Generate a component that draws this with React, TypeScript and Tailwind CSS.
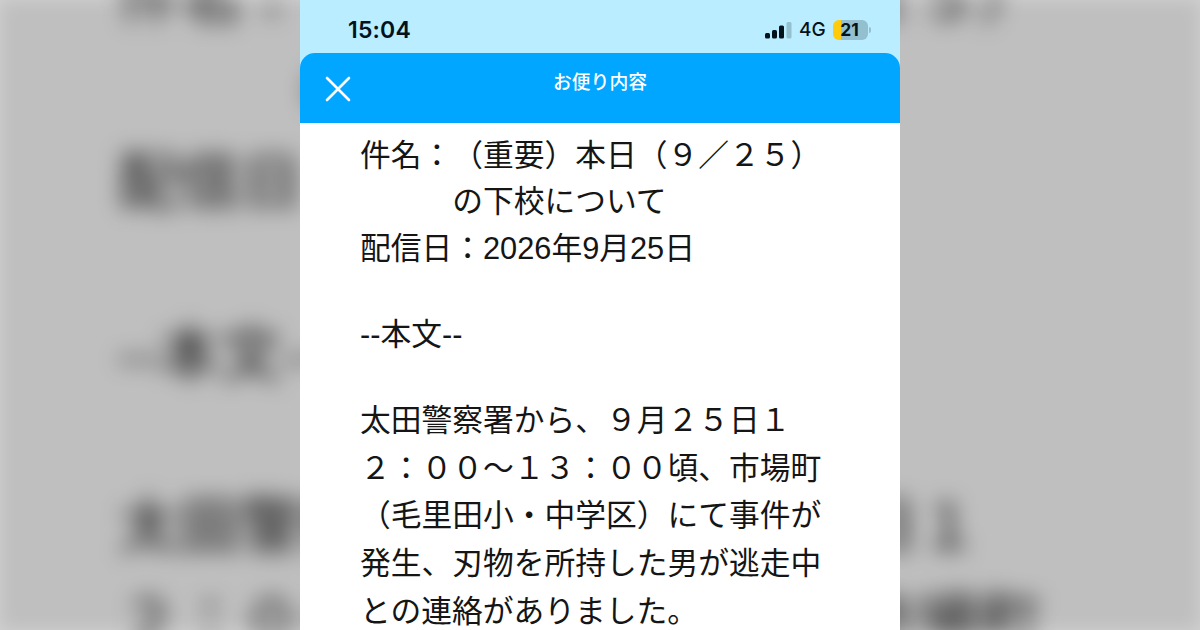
import React from 'react';

const SUBJECT = ['（重要）本日（９／２５）', 'の下校について'];

const BODY = [
  '太田警察署から、９月２５日１',
  '２：００〜１３：００頃、市場町',
  '（毛里田小・中学区）にて事件が',
  '発生、刃物を所持した男が逃走中',
  'との連絡がありました。',
];

const StatusBar: React.FC = () => (
  <div className="flex h-[53px] shrink-0 items-start justify-between bg-[#baedff] pl-[48px] pr-[29px] text-[#04121c]">
    <span className="mt-[13px] font-['Inter',sans-serif] text-[23px] font-semibold leading-[34px] tracking-[0.2px]">15:04</span>
    <div className="mt-[19px] flex h-[21px] items-center">
      <svg className="h-[18px] w-[27px]" viewBox="0 0 27 18" fill="#04121c">
        <rect x="0" y="12" width="5" height="5.5" rx="1.5" />
        <rect x="7" y="9" width="5" height="8.5" rx="1.5" />
        <rect x="14" y="4.5" width="5" height="13" rx="1.5" />
        <rect x="21.5" y="1" width="5" height="16.5" rx="1.5" fill="#94bfce" />
      </svg>
      <span className="ml-[7px] w-[34px] font-['Inter',sans-serif] text-[19px] font-medium leading-[21px]">4G</span>
      <div className="flex h-[20px] w-[35px] items-center justify-center overflow-hidden rounded-[6px] bg-[linear-gradient(90deg,#ffcb0a_8px,#94bfce_8px)]">
        <span className="mr-[2px] font-['Inter',sans-serif] text-[17.5px] font-bold leading-[20px]">21</span>
      </div>
      <div className="ml-px h-[6px] w-[2px] rounded-r-full bg-[#94bfce]" />
    </div>
  </div>
);

const TitleBar: React.FC = () => (
  <div className="shrink-0 bg-[#baedff]">
    <div className="grid h-[70px] grid-cols-[1fr_auto_1fr] rounded-t-[15px] bg-[#00a6ff] text-white">
      <svg className="ml-[25px] mt-[23px] size-[26px]" viewBox="0 0 26 26" stroke="currentColor" strokeWidth="2.6" strokeLinecap="round">
        <path d="M2 2L24 24M24 2L2 24" />
      </svg>
      <h1 className="mt-[14px] font-['Noto_Sans_CJK_JP',sans-serif] text-[18.8px] font-medium leading-[28px]">お便り内容</h1>
    </div>
  </div>
);

const Letter: React.FC = () => (
  <div className="flex flex-1 flex-col overflow-hidden whitespace-nowrap bg-white pl-[60px] pt-[10px] font-['Liberation_Sans','Noto_Sans_CJK_JP',sans-serif] text-[30.75px] font-normal leading-[46.3px] text-[#151515]">
    <div className="flex">
      <span>件名：</span>
      <div>
        {SUBJECT.map((line) => (
          <p key={line}>{line}</p>
        ))}
      </div>
    </div>
    <p>配信日：2026年9月25日</p>
    <p className="mt-[40px]">--本文--</p>
    <div className="mt-[39px] leading-[47.6px]">
      {BODY.map((line) => (
        <p key={line}>{line}</p>
      ))}
    </div>
  </div>
);

const Phone: React.FC = () => (
  <div className="flex h-[630px] w-[600px] flex-col overflow-hidden">
    <StatusBar />
    <TitleBar />
    <Letter />
  </div>
);

export default function App() {
  return (
    <div className="relative flex h-[630px] w-[1200px] justify-center overflow-hidden bg-white">
      {/* enlarged, blurred copy behind the phone */}
      <div aria-hidden="true" className="absolute left-[298px] top-px scale-200 blur-[5.5px] grayscale">
        <Phone />
      </div>
      <div className="absolute inset-0 bg-black/25 shadow-[inset_0_0_18px_rgba(255,255,255,0.3)]" />
      <main className="relative">
        <Phone />
      </main>
    </div>
  );
}
